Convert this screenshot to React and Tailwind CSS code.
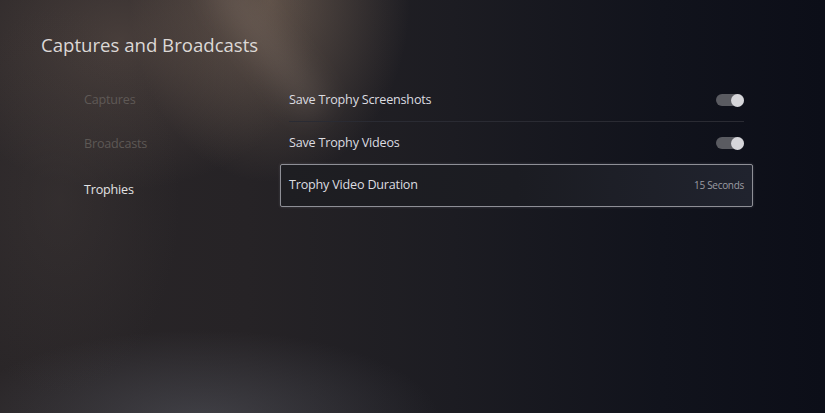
import React from "react";

const font = { fontFamily: '"Open Sans", "Noto Sans", sans-serif' };

function Toggle() {
  return (
    <div className="relative h-[12px] w-[28px] rounded-full bg-[#5a5b61]">
      <div className="absolute right-0 top-[-0.5px] h-[13px] w-[13px] rounded-full bg-[#d6d6da]" />
    </div>
  );
}

function Row({ label, children }) {
  return (
    <div className="flex h-[42px] items-center justify-between px-[9px]">
      <span className="text-[12.6px] tracking-[-0.2px] text-[#dcdce0]">{label}</span>
      {children}
    </div>
  );
}

export default function App() {
  return (
    <div
      className="relative h-[413px] w-[825px] overflow-hidden bg-[#15161d] antialiased"
      style={font}
    >
      {/* backdrop: warm spotlight at top-left, navy on the right, haze at the bottom */}
      <div className="absolute inset-0 bg-[linear-gradient(90deg,#2a2628_0%,#262326_30%,#1c1c22_55%,#11131c_80%,#0c0e18_100%)]" />
      <div className="absolute inset-0 bg-[radial-gradient(ellipse_200px_260px_at_270px_0px,rgba(140,118,100,0.55),transparent_70%)]" />
      <div className="absolute inset-0 bg-[radial-gradient(ellipse_260px_200px_at_120px_40px,rgba(110,92,82,0.45),transparent_75%)]" />
      <div className="absolute inset-0 bg-[radial-gradient(ellipse_320px_120px_at_200px_420px,rgba(95,98,108,0.45),transparent_75%)]" />
      <div className="absolute inset-0 bg-[radial-gradient(ellipse_160px_260px_at_60px_200px,rgba(70,62,60,0.35),transparent_75%)]" />
      {/* diagonal light beam */}
      <div className="absolute left-[250px] top-[-40px] h-[170px] w-[34px] rotate-[-38deg] rounded-full bg-[#8a7a70] opacity-25 blur-[14px]" />

      <div className="relative">
        <h1 className="pl-[41px] pt-[31px] text-[18.6px] font-normal leading-[28px] tracking-[0px] text-[#dcd8d6]">
          Captures and Broadcasts
        </h1>

        <div className="mt-[20px] flex">
          <nav className="flex w-[280px] flex-col pl-[84px] pt-[12px] text-[12.6px] tracking-[-0.2px]">
            <span className="h-[44px] leading-[18px] text-[#5f5956]">Captures</span>
            <span className="h-[45px] leading-[18px] text-[#5d5855]">Broadcasts</span>
            <span className="leading-[19px] text-[#e2e2e4]">Trophies</span>
          </nav>

          <div className="flex w-[473px] flex-col">
            <Row label="Save Trophy Screenshots">
              <Toggle />
            </Row>
            <div className="mx-[9px] h-px bg-[#2a2b33]" />
            <Row label="Save Trophy Videos">
              <Toggle />
            </Row>
            <div className="flex h-[43px] items-center justify-between rounded-[2px] border border-[#8e8f96] bg-[linear-gradient(90deg,#1e1e22_0%,#1b1c22_50%,#20232e_100%)] px-[8px] shadow-[0_0_3px_rgba(180,180,190,0.25)]">
              <span className="text-[12.6px] tracking-[-0.2px] text-[#dcdce0]">Trophy Video Duration</span>
              <span className="text-[10px] tracking-[-0.3px] text-[#9c9ca2]">15 Seconds</span>
            </div>
          </div>
        </div>
      </div>
    </div>
  );
}
